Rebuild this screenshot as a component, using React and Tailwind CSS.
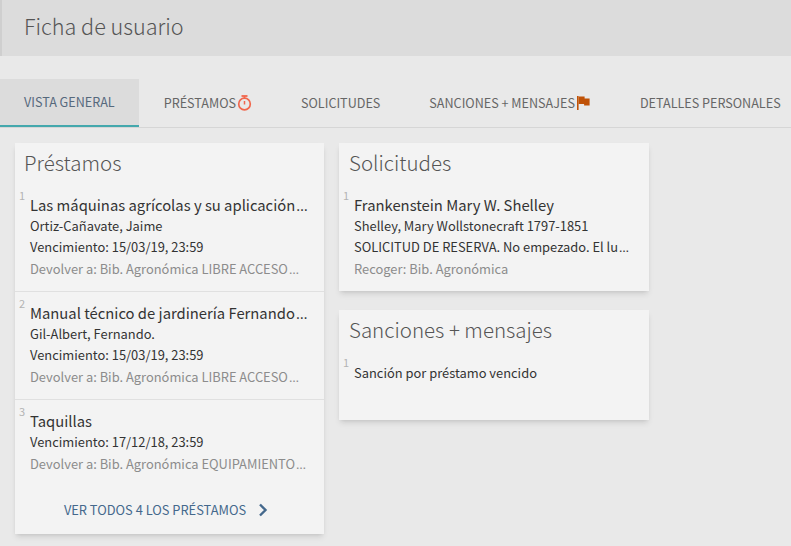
import React from 'react';

const tabs = [
    { label: 'VISTA GENERAL', active: true },
    { label: 'PRÉSTAMOS', icon: 'timer' },
    { label: 'SOLICITUDES' },
    { label: 'SANCIONES + MENSAJES', icon: 'flag' },
    { label: 'DETALLES PERSONALES' },
];

const loans = [
    {
        title: 'Las máquinas agrícolas y su aplicación',
        author: 'Ortiz-Cañavate, Jaime',
        due: 'Vencimiento: 15/03/19, 23:59',
        place: 'Devolver a: Bib. Agronómica LIBRE ACCESO',
    },
    {
        title: 'Manual técnico de jardinería Fernando',
        author: 'Gil-Albert, Fernando.',
        due: 'Vencimiento: 15/03/19, 23:59',
        place: 'Devolver a: Bib. Agronómica LIBRE ACCESO',
    },
    {
        title: 'Taquillas',
        due: 'Vencimiento: 17/12/18, 23:59',
        place: 'Devolver a: Bib. Agronómica EQUIPAMIENTO',
    },
];

function TimerIcon() {
    return (
        <svg width="15" height="16" viewBox="0 0 15 16" className="ml-[1px]" fill="none" stroke="#f1674d">
            <circle cx="7.5" cy="9" r="5.8" strokeWidth="1.7" />
            <path d="M4.5 1h6" strokeWidth="1.8" />
            <path d="M7.5 1v2" strokeWidth="1.6" />
            <path d="M7.5 6v3.5" strokeWidth="1.5" />
        </svg>
    );
}

function FlagIcon() {
    return (
        <svg width="13" height="14" viewBox="0 0 13 14" className="ml-[2px] mr-[1px]" fill="#c05207">
            <path d="M0 0h1.6v14H0z" />
            <path d="M1.6 .5h6v2h5v7h-5.500v-1.500H1.600z" />
        </svg>
    );
}

function Number({ n }) {
    return <div className="absolute left-[4px] top-[4px] text-[11px] leading-[14px] text-[#b3b3b3]">{n}</div>;
}

// the dots come from another font, the CJK one centres them on the line
function Dots() {
    return <span className="font-['Open_Sans',sans-serif] leading-[0] tracking-[1px] ml-[1px]">…</span>;
}

function LoanRow({ loan, n, first }) {
    return (
        <div className={`relative border-t pl-[15px] pt-[11px] pb-[11px] whitespace-nowrap ${first ? 'border-transparent' : 'border-[#e0e0e0]'}`}>
            <Number n={n} />
            <div className="text-[14.8px] leading-[20px] text-[#333333]">
                {loan.title}
                {n < 3 && <Dots />}
            </div>
            {loan.author && <div className="text-[12.9px] leading-[21px] text-[#333333]">{loan.author}</div>}
            <div className="text-[12.9px] leading-[21px] text-[#333333]">{loan.due}</div>
            <div className="text-[12.9px] leading-[23px] text-[#8c8c8c]">
                {loan.place}
                <Dots />
            </div>
        </div>
    );
}

export default function App() {
    return (
        <div className="w-[791px] h-[546px] overflow-hidden bg-[#e9e9e9] font-['Noto_Sans_CJK_SC',sans-serif]">
            {/* page header */}
            <div className="h-[56px] bg-[#dcdcdc] border-l-2 border-[#cfcfcf] pl-[22px] pb-[4px] flex items-center">
                <h1 className="text-[21.6px] font-light text-[#555555]">Ficha de usuario</h1>
            </div>

            {/* tabs */}
            <div className="mt-[23px] h-[49px] border-b border-[#d6d6d6] flex gap-[1px] whitespace-nowrap">
                {tabs.map((tab) => (
                    <div
                        key={tab.label}
                        className={`px-[24px] shrink-0 h-[48px] flex items-center text-[12.6px] ${tab.active ? 'bg-[#dcdcdc] border-b-2 border-[#44a8ad] text-[#56697c]' : 'text-[#666666]'}`}
                    >
                        {tab.label}
                        {tab.icon === 'timer' && <TimerIcon />}
                        {tab.icon === 'flag' && <FlagIcon />}
                    </div>
                ))}
            </div>

            {/* cards */}
            <div className="flex items-start gap-[15px] pl-[15px] pt-[15px]">
                <div className="w-[309px] h-[391px] bg-[#f3f3f3] shadow-md">
                    <h2 className="px-[9px] pt-[4px] h-[40px] text-[20.5px] leading-[30px] font-light text-[#555555]">Préstamos</h2>
                    {loans.map((loan, i) => (
                        <LoanRow key={loan.title} loan={loan} n={i + 1} first={i === 0} />
                    ))}
                    <div className="flex items-center justify-center h-[48px] pr-[7px] text-[12.85px] text-[#44688c]">
                        VER TODOS 4 LOS PRÉSTAMOS
                        <svg width="10" height="14" viewBox="0 0 10 14" className="ml-[12px]" fill="none" stroke="#44688c" strokeWidth="2.400">
                            <path d="M2 1.500 7.500 7 2 12.500" />
                        </svg>
                    </div>
                </div>

                <div className="w-[310px] flex flex-col gap-[19px]">
                    <div className="h-[148px] bg-[#f3f3f3] shadow-md">
                        <h2 className="px-[10px] pt-[4px] h-[40px] text-[20.5px] leading-[30px] font-light text-[#555555]">Solicitudes</h2>
                        <div className="relative border-t border-transparent pl-[15px] pt-[11px] whitespace-nowrap">
                            <Number n={1} />
                            <div className="text-[14.8px] leading-[20px] text-[#333333]">Frankenstein Mary W. Shelley</div>
                            <div className="text-[12.9px] leading-[21px] text-[#333333]">Shelley, Mary Wollstonecraft 1797-1851</div>
                            <div className="text-[12.9px] leading-[21px] text-[#333333]">
                                SOLICITUD DE RESERVA. No empezado. El lu
                                <Dots />
                            </div>
                            <div className="text-[12.9px] leading-[23px] text-[#8c8c8c]">Recoger: Bib. Agronómica</div>
                        </div>
                    </div>
                    <div className="h-[110px] bg-[#f3f3f3] shadow-md">
                        <h2 className="px-[10px] pt-[4px] h-[40px] text-[20.5px] leading-[30px] font-light text-[#555555]">Sanciones + mensajes</h2>
                        <div className="relative border-t border-transparent pl-[15px] pt-[11px] whitespace-nowrap">
                            <Number n={1} />
                            <div className="text-[12.9px] leading-[22px] text-[#333333]">Sanción por préstamo vencido</div>
                        </div>
                    </div>
                </div>
            </div>
        </div>
    );
}
